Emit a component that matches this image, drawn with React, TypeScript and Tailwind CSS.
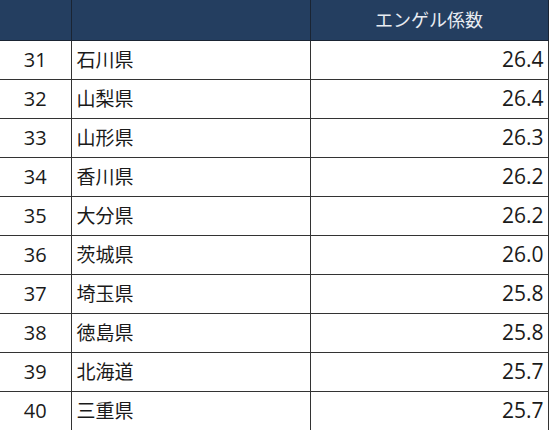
const rows = [
  { rank: 31, name: "石川県", value: "26.4" },
  { rank: 32, name: "山梨県", value: "26.4" },
  { rank: 33, name: "山形県", value: "26.3" },
  { rank: 34, name: "香川県", value: "26.2" },
  { rank: 35, name: "大分県", value: "26.2" },
  { rank: 36, name: "茨城県", value: "26.0" },
  { rank: 37, name: "埼玉県", value: "25.8" },
  { rank: 38, name: "徳島県", value: "25.8" },
  { rank: 39, name: "北海道", value: "25.7" },
  { rank: 40, name: "三重県", value: "25.7" },
];

export default function App() {
  return (
    <div className="w-[550px] h-[430px] bg-white overflow-hidden font-['Noto_Sans_CJK_JP',sans-serif]">
      <table className="w-[548px] border-collapse table-fixed">
        <colgroup>
          <col className="w-[71px]" />
          <col className="w-[239px]" />
          <col className="w-[238px]" />
        </colgroup>
        <thead>
          <tr className="h-[40px] bg-[#243e60] text-white">
            <th className="border-r border-b border-[#1a2433]"></th>
            <th className="border-r border-b border-[#1a2433]"></th>
            <th className="border-r border-b border-[#1a2433] text-[18px] font-normal text-center text-[#e8ecf2]">
              エンゲル係数
            </th>
          </tr>
        </thead>
        <tbody>
          {rows.map((r) => (
            <tr key={r.rank} className="h-[39px] text-[#1a1a1a]">
              <td className="border-r border-b border-[#333] text-center text-[20px] font-['Open_Sans',sans-serif]">
                {r.rank}
              </td>
              <td className="border-r border-b border-[#333] pl-[5px] text-[19px]">{r.name}</td>
              <td className="border-r border-b border-[#333] text-right pr-[4px] text-[21px] font-['Open_Sans',sans-serif]">
                {r.value}
              </td>
            </tr>
          ))}
        </tbody>
      </table>
    </div>
  );
}
